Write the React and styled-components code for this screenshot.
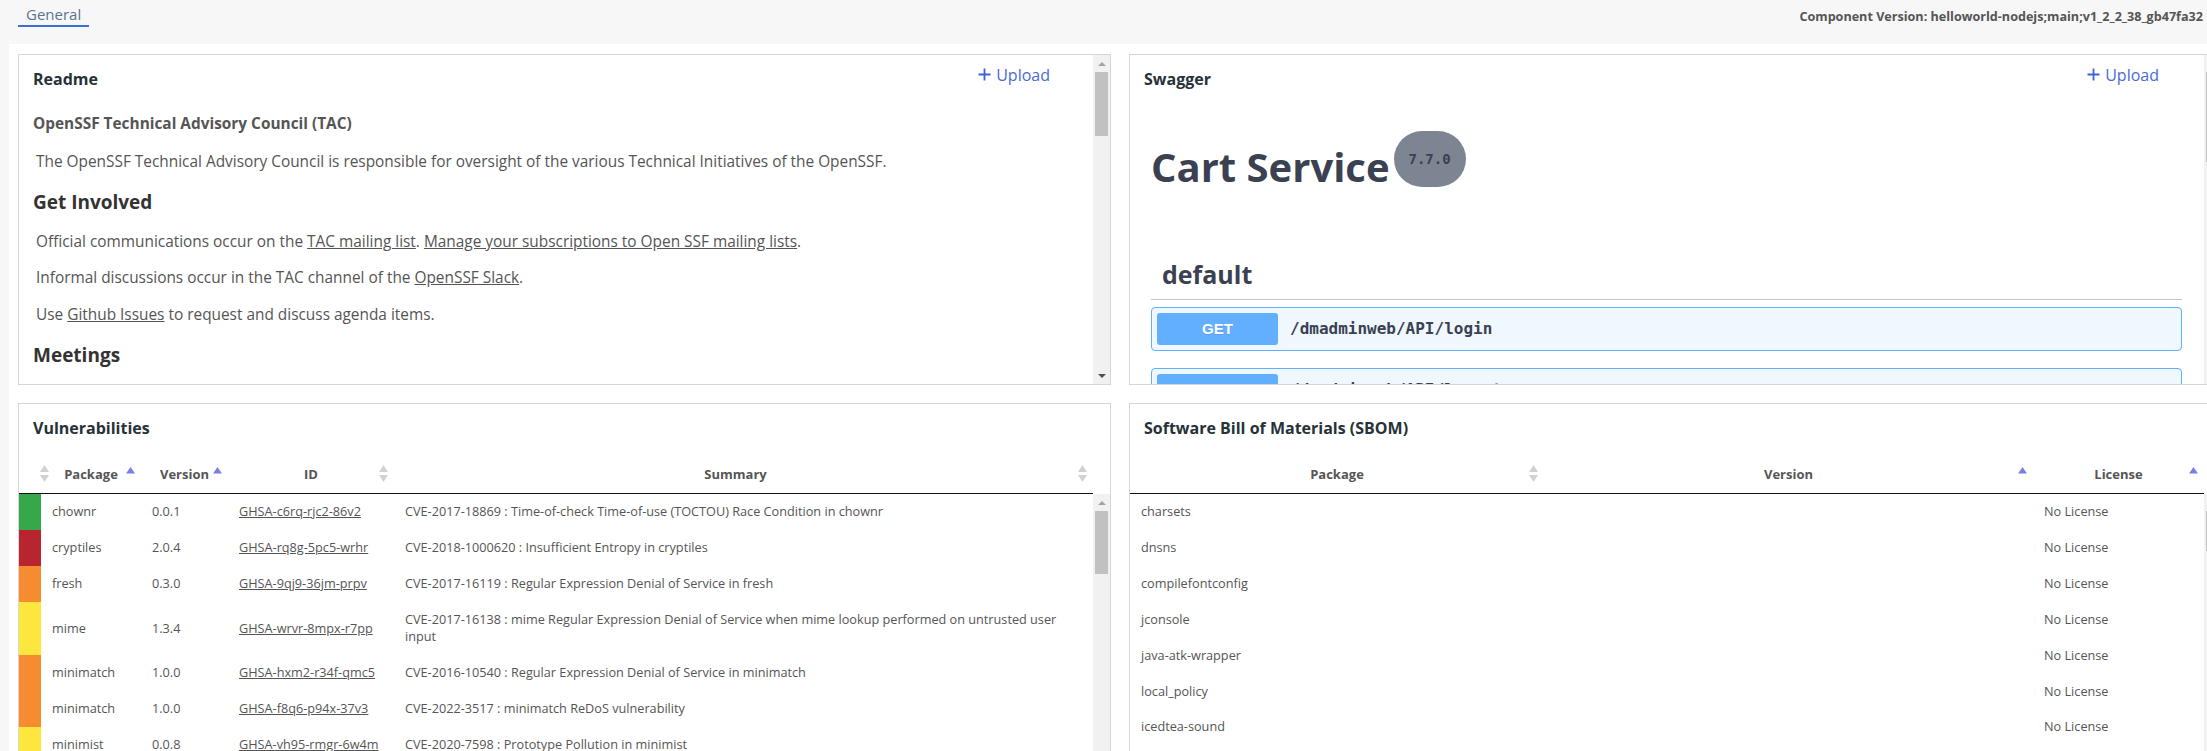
import React from 'react';
import styled, { createGlobalStyle } from 'styled-components';

const GlobalStyle = createGlobalStyle`
  html, body { margin: 0; padding: 0; }
  body {
    background: #f7f7f7;
    overflow: hidden;
    font-family: 'Open Sans', 'Noto Sans', sans-serif;
    color: #555;
  }
  *, *::before, *::after { box-sizing: border-box; }
`;

/* ---------- scrollbar drawing ---------- */
const ScrollbarTrack = styled.div`
  flex: none;
  width: 17px;
  background: #f1f1f1;
  display: flex;
  flex-direction: column;
`;

const ScrollArrow = styled.div`
  flex: none;
  height: 17px;
  display: flex;
  align-items: center;
  justify-content: center;
`;

const ScrollRail = styled.div`
  flex: 1;
  padding: 0 2px;
  min-height: 0;
`;

const ScrollThumb = styled.div`
  height: ${(p) => p.$size}px;
  background: #c1c1c1;
`;

const Scrollbar = ({ thumb }) => (
  <ScrollbarTrack aria-hidden="true">
    <ScrollArrow>
      <svg width="8" height="4" viewBox="0 0 8 4"><path d="M0 4 L4 0 L8 4 Z" fill="#a3a3a3" /></svg>
    </ScrollArrow>
    <ScrollRail>
      <ScrollThumb $size={thumb} />
    </ScrollRail>
    <ScrollArrow>
      <svg width="8" height="4" viewBox="0 0 8 4"><path d="M0 0 L4 4 L8 0 Z" fill="#505050" /></svg>
    </ScrollArrow>
  </ScrollbarTrack>
);

/* ---------- page frame ---------- */
const Page = styled.div`
  min-height: 100vh;
`;

const TopBar = styled.header`
  height: 44px;
  display: flex;
  justify-content: space-between;
  align-items: flex-start;
  padding: 0 4px 0 18px;
`;

const Tab = styled.a`
  margin-top: 3px;
  padding: 0 8px;
  font-size: 15px;
  line-height: 22px;
  color: #5b7391;
  text-decoration: none;
  border-bottom: 2px solid ${(p) => (p.$active ? '#3b6fd6' : 'transparent')};
`;

const VersionLabel = styled.div`
  margin-top: 8px;
  font-size: 12.6px;
  line-height: 18px;
  font-weight: 700;
  color: #555;
  white-space: nowrap;
`;

const Main = styled.main`
  margin-left: 9px;
  width: 2222px;
  background: #fff;
  padding: 10px 9px;
  display: grid;
  grid-template-columns: 1093px 1093px;
  grid-template-rows: 331px 400px;
  gap: 18px;
`;

const Card = styled.section`
  border: 1px solid #d6d6d6;
  background: #fff;
  min-width: 0;
  overflow: hidden;
`;

const ScrollCard = styled(Card)`
  display: flex;
`;

const CardViewport = styled.div`
  flex: 1;
  min-width: 0;
  overflow: hidden;
`;

const TableCard = styled(Card)`
  display: flex;
  flex-direction: column;
`;

const CardHeader = styled.div`
  display: flex;
  justify-content: space-between;
  align-items: flex-start;
  padding: 8px ${(p) => p.$right || '14px'} 0 14px;
  flex: none;
`;

const CardTitle = styled.h2`
  margin: 5px 0 0;
  font-size: 16px;
  line-height: 22px;
  font-weight: 700;
  color: #263238;
`;

const UploadButton = styled.button`
  margin-top: 1.5px;
  display: flex;
  align-items: center;
  gap: 5px;
  padding: 0;
  border: none;
  background: none;
  font-family: inherit;
  font-size: 16px;
  line-height: 20px;
  color: #4a69d8;
  cursor: pointer;
`;

const PlusIcon = () => (
  <svg width="13" height="13" viewBox="0 0 13 13" aria-hidden="true">
    <path d="M6.5 0.5v12M0.5 6.5h12" stroke="#3f62d6" strokeWidth="1.8" fill="none" />
  </svg>
);

/* ---------- Readme ---------- */
const Markdown = styled.div`
  padding: 0 14px 24px 14px;
`;

const MdTitle = styled.h1`
  margin: 23.5px 0 0;
  font-size: 15.4px;
  line-height: 20px;
  font-weight: 700;
  color: #555;
  & + p { margin-top: 17px; }
`;

const MdHeading = styled.h2`
  margin: 15.5px 0 0;
  font-size: 19px;
  line-height: 28px;
  font-weight: 700;
  color: #333;
`;

const MdPara = styled.p`
  margin: 14.5px 0 0 3px;
  font-size: 15.4px;
  line-height: 22px;
  color: #555;
`;

const MdLink = styled.a`
  color: #555;
  text-decoration: underline;
`;

/* ---------- Swagger ---------- */
const SwaggerBody = styled.div`
  padding: 0 22px 30px 21px;
`;

const InfoRow = styled.div`
  margin-top: 41px;
  display: flex;
  align-items: flex-start;
`;

const InfoTitle = styled.h2`
  margin: 8px 0 0;
  font-size: 40px;
  line-height: 55px;
  font-weight: 700;
  color: #3b4151;
`;

const VersionBadge = styled.span`
  margin-left: 4px;
  width: 72px;
  height: 56px;
  border-radius: 57px;
  background: #7d8492;
  display: flex;
  align-items: center;
  justify-content: center;
  font-family: 'DejaVu Sans Mono', 'Liberation Mono', monospace;
  font-size: 14px;
  font-weight: 700;
  color: #3b4151;
`;

const TagHeader = styled.h3`
  margin: 63px 0 0;
  padding: 0 10px 8px 11px;
  font-size: 25px;
  line-height: 34px;
  font-weight: 700;
  color: #3b4151;
  border-bottom: 1px solid rgba(59, 65, 81, 0.3);
`;

const OpBlock = styled.div`
  margin: ${(p) => (p.$first ? '6.5px' : '0')} 0 17px;
  padding: 5px;
  display: flex;
  align-items: center;
  border: 1px solid ${(p) => p.$border};
  border-radius: 4px;
  background: ${(p) => p.$bg};
`;

const MethodBadge = styled.span`
  width: 121px;
  height: 32px;
  border-radius: 3px;
  background: ${(p) => p.$color};
  display: flex;
  align-items: center;
  justify-content: center;
  font-family: 'Liberation Sans', Arial, sans-serif;
  font-size: 15px;
  font-weight: 700;
  color: #fff;
  text-shadow: 0 1px 0 rgba(0, 0, 0, 0.1);
`;

const OpPath = styled.span`
  margin-left: 12px;
  font-family: 'DejaVu Sans Mono', 'Liberation Mono', monospace;
  font-size: 16px;
  font-weight: 600;
  color: #3b4151;
`;

/* ---------- Tables ---------- */
const HeadWrap = styled.div`
  margin-top: 16px;
  padding-right: 17px;
  flex: none;
`;

const HeadRow = styled.div`
  display: grid;
  grid-template-columns: ${(p) => p.$cols};
  border-bottom: 1px solid #111;
`;

const HeadCell = styled.div`
  position: relative;
  padding: 10px ${(p) => p.$padRight || '18px'} 10px 18px;
  font-size: 13px;
  line-height: 18px;
  font-weight: 700;
  color: #555;
  text-align: center;
  white-space: nowrap;
`;

const SortMark = styled.svg`
  position: absolute;
  right: 6px;
  top: 10px;
`;

const SortIcon = ({ state }) => (
  <SortMark width="9" height="17" viewBox="0 0 9 17" aria-hidden="true">
    {state === 'asc' ? (
      <path d="M0 8.5 L4.5 2 L9 8.5 Z" fill="#7b7fe3" />
    ) : (
      <>
        <path d="M0 7 L4.5 0 L9 7 Z" fill="#d2d2d2" />
        <path d="M0 10 L4.5 17 L9 10 Z" fill="#d2d2d2" />
      </>
    )}
  </SortMark>
);

const BodyFrame = styled.div`
  flex: 1;
  min-height: 0;
  display: flex;
`;

const BodyRows = styled.div`
  flex: 1;
  min-width: 0;
  overflow: hidden;
`;

const BodyRow = styled.div`
  display: grid;
  grid-template-columns: ${(p) => p.$cols};
`;

const Cell = styled.div`
  padding: 9.2px 11px;
  font-size: 12.7px;
  line-height: 17.5px;
  color: #555;
  display: flex;
  align-items: center;
`;

const SeverityCell = styled.div`
  background: ${(p) => p.$color};
`;

const CellLink = styled.a`
  color: #555;
  text-decoration: underline;
  white-space: nowrap;
`;

const SEV = {
  low: '#35a94a',
  critical: '#b8242f',
  high: '#f68b2f',
  moderate: '#fde73f',
};

const VULN_COLS = '22px 100px 87px 166px 1fr';
const SBOM_COLS = '414px 489px 1fr';

const vulns = [
  ['low', 'chownr', '0.0.1', 'GHSA-c6rq-rjc2-86v2', 'CVE-2017-18869 : Time-of-check Time-of-use (TOCTOU) Race Condition in chownr'],
  ['critical', 'cryptiles', '2.0.4', 'GHSA-rq8g-5pc5-wrhr', 'CVE-2018-1000620 : Insufficient Entropy in cryptiles'],
  ['high', 'fresh', '0.3.0', 'GHSA-9qj9-36jm-prpv', 'CVE-2017-16119 : Regular Expression Denial of Service in fresh'],
  ['moderate', 'mime', '1.3.4', 'GHSA-wrvr-8mpx-r7pp', 'CVE-2017-16138 : mime Regular Expression Denial of Service when mime lookup performed on untrusted user input'],
  ['high', 'minimatch', '1.0.0', 'GHSA-hxm2-r34f-qmc5', 'CVE-2016-10540 : Regular Expression Denial of Service in minimatch'],
  ['high', 'minimatch', '1.0.0', 'GHSA-f8q6-p94x-37v3', 'CVE-2022-3517 : minimatch ReDoS vulnerability'],
  ['moderate', 'minimist', '0.0.8', 'GHSA-vh95-rmgr-6w4m', 'CVE-2020-7598 : Prototype Pollution in minimist'],
  ['critical', 'minimist', '0.0.8', 'GHSA-xvch-5gv4-984h', 'CVE-2021-44906 : Prototype Pollution in minimist'],
  ['high', 'ms', '0.7.1', 'GHSA-3fx5-fwvr-xrjg', 'CVE-2017-20162 : Vercel ms Inefficient Regular Expression Complexity vulnerability'],
  ['moderate', 'ms', '0.7.1', 'GHSA-w9mr-4mfr-499f', 'CVE-2015-8315 : Regular Expression Denial of Service in ms'],
];

const sbom = [
  'charsets', 'dnsns', 'compilefontconfig', 'jconsole', 'java-atk-wrapper', 'local_policy', 'icedtea-sound',
  'cldrdata', 'jaccess', 'localedata', 'nashorn', 'sunec',
];

const ops = [
  '/dmadminweb/API/login',
  '/dmadminweb/API/logout',
  '/dmadminweb/API/cart',
];

const VulnerabilityTable = () => (
  <>
    <HeadWrap>
      <HeadRow $cols={VULN_COLS}>
        <HeadCell><SortIcon state="both" /></HeadCell>
        <HeadCell>Package<SortIcon state="asc" /></HeadCell>
        <HeadCell>Version<SortIcon state="asc" /></HeadCell>
        <HeadCell>ID<SortIcon state="both" /></HeadCell>
        <HeadCell $padRight="34px">Summary<SortIcon state="both" /></HeadCell>
      </HeadRow>
    </HeadWrap>
    <BodyFrame>
      <BodyRows>
        {vulns.map(([sev, pkg, ver, id, summary], i) => (
          <BodyRow key={i} $cols={VULN_COLS}>
            <SeverityCell $color={SEV[sev]} />
            <Cell>{pkg}</Cell>
            <Cell>{ver}</Cell>
            <Cell><CellLink href="#">{id}</CellLink></Cell>
            <Cell>{summary}</Cell>
          </BodyRow>
        ))}
      </BodyRows>
      <Scrollbar thumb={63} />
    </BodyFrame>
  </>
);

const SbomTable = () => (
  <>
    <HeadWrap>
      <HeadRow $cols={SBOM_COLS}>
        <HeadCell>Package<SortIcon state="both" /></HeadCell>
        <HeadCell>Version<SortIcon state="asc" /></HeadCell>
        <HeadCell>License<SortIcon state="asc" /></HeadCell>
      </HeadRow>
    </HeadWrap>
    <BodyFrame>
      <BodyRows>
        {sbom.map((name) => (
          <BodyRow key={name} $cols={SBOM_COLS}>
            <Cell>{name}</Cell>
            <Cell />
            <Cell>No License</Cell>
          </BodyRow>
        ))}
      </BodyRows>
      <Scrollbar thumb={40} />
    </BodyFrame>
  </>
);

export default function App() {
  return (
    <Page>
      <GlobalStyle />
      <TopBar>
        <Tab href="#" $active>General</Tab>
        <VersionLabel>Component Version: helloworld-nodejs;main;v1_2_2_38_gb47fa32</VersionLabel>
      </TopBar>
      <Main>
        <ScrollCard>
          <CardViewport>
            <CardHeader $right="43px">
              <CardTitle>Readme</CardTitle>
              <UploadButton><PlusIcon />Upload</UploadButton>
            </CardHeader>
            <Markdown>
              <MdTitle>OpenSSF Technical Advisory Council (TAC)</MdTitle>
              <MdPara>The OpenSSF Technical Advisory Council is responsible for oversight of the various Technical Initiatives of the OpenSSF.</MdPara>
              <MdHeading>Get Involved</MdHeading>
              <MdPara>
                Official communications occur on the <MdLink href="#">TAC mailing list</MdLink>.{' '}
                <MdLink href="#">Manage your subscriptions to Open SSF mailing lists</MdLink>.
              </MdPara>
              <MdPara>Informal discussions occur in the TAC channel of the <MdLink href="#">OpenSSF Slack</MdLink>.</MdPara>
              <MdPara>Use <MdLink href="#">Github Issues</MdLink> to request and discuss agenda items.</MdPara>
              <MdHeading>Meetings</MdHeading>
              <MdPara>The TAC meets every other Tuesday at 10:00 Pacific time. The meeting is open to the public and anyone is welcome to attend.</MdPara>
            </Markdown>
          </CardViewport>
          <Scrollbar thumb={64} />
        </ScrollCard>

        <ScrollCard>
          <CardViewport>
            <CardHeader $right="45px">
              <CardTitle>Swagger</CardTitle>
              <UploadButton><PlusIcon />Upload</UploadButton>
            </CardHeader>
            <SwaggerBody>
              <InfoRow>
                <InfoTitle>Cart Service</InfoTitle>
                <VersionBadge>7.7.0</VersionBadge>
              </InfoRow>
              <TagHeader>default</TagHeader>
              {ops.map((path, i) => (
                <OpBlock key={path} $first={i === 0} $border="#61affe" $bg="#eff7ff">
                  <MethodBadge $color="#61affe">GET</MethodBadge>
                  <OpPath>{path}</OpPath>
                </OpBlock>
              ))}
            </SwaggerBody>
          </CardViewport>
          <Scrollbar thumb={90} />
        </ScrollCard>

        <TableCard>
          <CardHeader>
            <CardTitle>Vulnerabilities</CardTitle>
          </CardHeader>
          <VulnerabilityTable />
        </TableCard>

        <TableCard>
          <CardHeader>
            <CardTitle>Software Bill of Materials (SBOM)</CardTitle>
          </CardHeader>
          <SbomTable />
        </TableCard>
      </Main>
    </Page>
  );
}
